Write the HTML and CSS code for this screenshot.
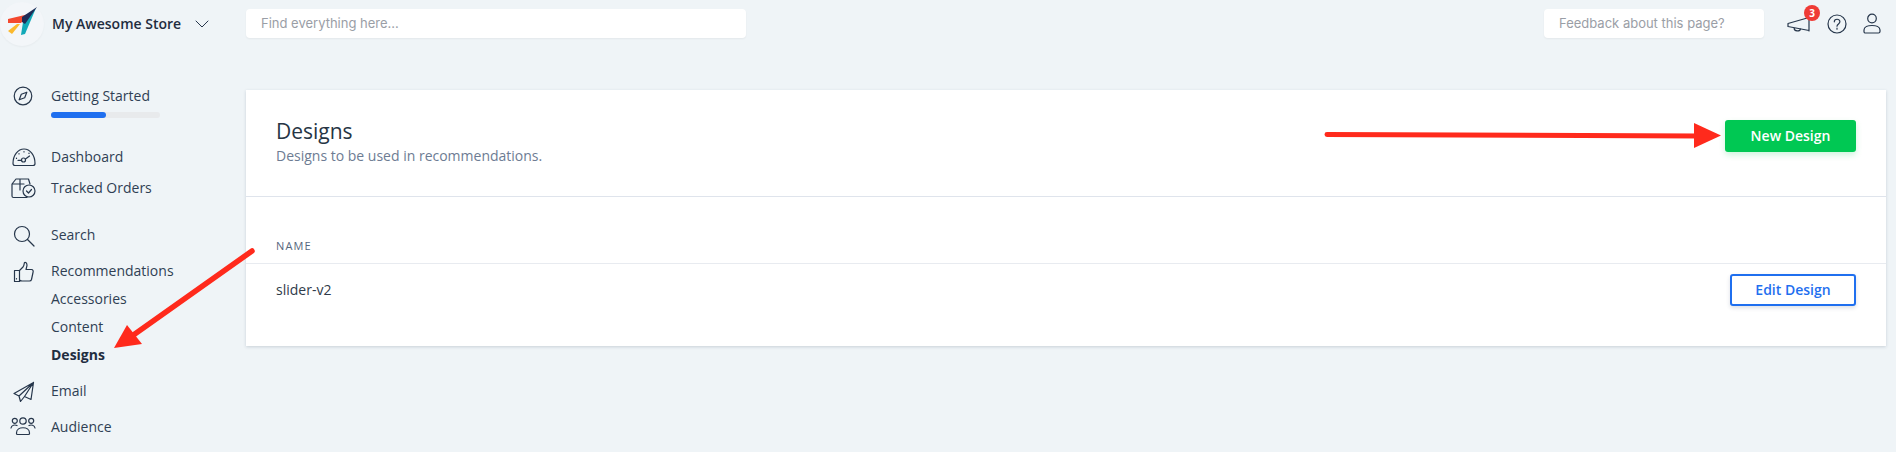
FILE: index.html
```html
<!DOCTYPE html>
<html lang="en">
	<head>
		<meta charset="UTF-8">
		<meta name="viewport" content="width=device-width, initial-scale=1.0">
		<title>Designs</title>
		<link rel="stylesheet" href="styles.css">
	</head>
	<body>
		<header class="topbar">
			<div class="store">
				<div class="store-logo">
					<svg width="44" height="44" viewBox="0 0 44 44">
						<polygon points="8,17 29,12 21,21 8,21" fill="#f4492f"/>
						<polygon points="8,29 17,22 20,22 12,32" fill="#fbb92d"/>
						<polygon points="23,20 21,33 25,32 36,6" fill="#12a9b8"/>
						<polygon points="37,5 22,15 22,20 25,22" fill="#1f2c57"/>
					</svg>
				</div>
				<span class="store-name">My Awesome Store</span>
				<svg class="store-caret" width="14" height="8" viewBox="0 0 14 8"><path d="M1 1l6 6 6-6"/></svg>
			</div>
			<div class="top-field search-field">Find everything here...</div>
			<div class="top-right">
				<div class="top-field feedback-field">Feedback about this page?</div>
				<div class="top-icons">
					<div class="bell">
						<svg width="24" height="20" viewBox="0 0 24 20"><path d="M1 8.500L22 2.500V15.500L1 11.500ZM22 2.500V16M7 12.800c0 4 6 4 6.500 1"/></svg>
						<span class="badge">3</span>
					</div>
					<svg width="20" height="20" viewBox="0 0 20 20"><circle cx="10" cy="10" r="9"/><path d="M7.300 7.800c0-3.400 5.600-3.400 5.600 0 0 2.200-2.900 2-2.900 4.400M10 14.200v1"/></svg>
					<svg width="18" height="21" viewBox="0 0 18 21"><circle cx="9" cy="5.500" r="4.300"/><path d="M1 17c0-6 16-6 16 0v1.500c0 1-.6 1.500-1.500 1.500h-13C1.600 20 1 19.500 1 18.500Z"/></svg>
				</div>
			</div>
		</header>

		<div class="layout">
			<nav class="sidebar">
				<div class="nav-group started">
					<a class="nav-item">
						<svg class="nav-icon" width="20" height="20" viewBox="0 0 20 20"><circle cx="10" cy="10" r="8.800"/><path d="M13.800 6.200L11.700 11.700 6.200 13.800 8.300 8.300Z"/></svg>
						Getting Started
					</a>
					<div class="progress"><div class="progress-fill"></div></div>
				</div>

				<div class="nav-group dashboard">
					<a class="nav-item">
						<svg class="nav-icon icon-wide" width="24" height="20" viewBox="0 0 24 20"><path d="M3 18.500c-1.200 0-2-.7-2-2C1 8 6 2 12 2s11 6 11 14.500c0 1.300-.8 2-2 2ZM17.500 9l-4 3"/><circle cx="11.500" cy="13" r="2"/><path d="M9.500 13.300H6M4.500 11v.5M7 6.500v.5M12 4.500v.5M17 6v.5"/></svg>
						Dashboard
					</a>
					<a class="nav-item tracked">
						<svg class="nav-icon icon-box" width="26" height="22" viewBox="0 0 26 22"><path d="M20 7l-1.500-5H6L2 7v12c0 1 .6 1.500 1.500 1.500H17M2 7h12M10 2v5M10 7v6"/><circle cx="19" cy="14" r="6"/><path d="M16.500 14l2 2 3-3.500"/></svg>
						Tracked Orders
					</a>
				</div>

				<div class="nav-group search">
					<a class="nav-item">
						<svg class="nav-icon" width="22" height="22" viewBox="0 0 22 22"><circle cx="9" cy="9" r="7.500"/><path d="M14.500 14.500L21 21"/></svg>
						Search
					</a>
				</div>

				<div class="nav-group recs">
					<a class="nav-item">
						<svg class="nav-icon" width="22" height="22" viewBox="0 0 22 22"><path d="M6.500 9.500L10 6c1.200-1.500 1-3 1.500-4.500 2.500-.5 3 2.500 2 5l-.5 2h5.500c1.500 0 2 1.500 1.500 3l-1.500 7c-.3 1.200-1 1.500-2 1.500H9c-1 0-2-.5-2.500-1ZM1.500 9.500h5v11h-5Z"/><path d="M3.500 17.500v.5"/></svg>
						Recommendations
					</a>
					<a class="nav-item">Accessories</a>
					<a class="nav-item">Content</a>
					<a class="nav-item active">Designs</a>
				</div>

				<div class="nav-group email">
					<a class="nav-item">
						<svg class="nav-icon" width="22" height="22" viewBox="0 0 22 22"><path d="M20.500 1.500L1 12.500l5 2.500ZM20.500 1.500L18 18.500l-6.500-3ZM20.500 1.500L6 15l1.500 5.500 4-5"/></svg>
						Email
					</a>
				</div>

				<div class="nav-group audience">
					<a class="nav-item">
						<svg class="nav-icon icon-box" width="26" height="20" viewBox="0 0 26 20"><circle cx="13" cy="5" r="3.200"/><circle cx="4.800" cy="4.800" r="2.500"/><circle cx="21.200" cy="4.800" r="2.500"/><path d="M6.500 17c0-7 13-7 13 0v.5c0 .7-.5 1-1 1h-11c-.5 0-1-.3-1-1ZM1 12c.5-3 4-3.500 6-2.500M25 12c-.5-3-4-3.500-6-2.500"/></svg>
						Audience
					</a>
				</div>
			</nav>

			<main class="card">
				<div class="card-head">
					<div>
						<h1>Designs</h1>
						<p>Designs to be used in recommendations.</p>
					</div>
					<a class="btn btn-green">New Design</a>
				</div>
				<div class="table-head">Name</div>
				<div class="table-row">
					<span>slider-v2</span>
					<a class="btn btn-outline">Edit Design</a>
				</div>
			</main>
		</div>

		<!-- the red arrows drawn over the screenshot -->
		<svg class="arrows" width="1896" height="452" viewBox="0 0 1896 452">
			<path d="M1327 134.500L1698 136" stroke="#ff2a1c" stroke-width="5" fill="none"/>
			<polygon points="1694,123 1721,135.500 1694,148" fill="#ff2a1c"/>
			<path d="M252 251L132 336" stroke="#ff2a1c" stroke-width="5.500" fill="none"/>
			<polygon points="127,325 142,344 114,348" fill="#ff2a1c"/>
		</svg>
	</body>
</html>
```

FILE: styles.css
```css
*
{
	box-sizing: border-box;
}
body
{
	font-family: "Open Sans", Arial, sans-serif;
	font-size: 14px;
	background-color: #eff4f7;
	color: #2a3a4f;
	margin: 0;
	height: 452px;
	overflow: hidden;
}
svg
{
	fill: none;
	stroke: #26364b;
	stroke-width: 1.2;
	stroke-linecap: round;
	stroke-linejoin: round;
}
svg polygon
{
	stroke: none;
}
.topbar
{
	display: flex;
	align-items: center;
	height: 47px;
}
.store
{
	display: flex;
	align-items: center;
	width: 246px;
	flex-shrink: 0;
}
.store-logo
{
	width: 44px;
	height: 44px;
	border-radius: 50%;
	background-color: #f3f6f9;
	box-shadow: 0 1px 2px rgba(0, 0, 0, 0.04);
}
.store-logo svg
{
	display: block;
}
.store-name
{
	font-weight: 600;
	color: #1f2d40;
	margin-left: 8px;
	white-space: nowrap;
}
.store-caret
{
	margin-left: 14px;
	margin-top: 1px;
	stroke-width: 1;
}
.top-field
{
	font-family: Inter, Arial, sans-serif;
	font-size: 13px;
	color: #9a9ea6;
	background-color: #fff;
	border-radius: 4px;
	height: 29px;
	line-height: 29px;
	padding-left: 15px;
	box-shadow: 0 1px 2px rgba(0, 0, 0, 0.05);
}
.search-field
{
	width: 500px;
}
.top-right
{
	display: flex;
	align-items: center;
	margin-left: auto;
	padding-right: 15px;
}
.feedback-field
{
	width: 220px;
}
.top-icons
{
	display: flex;
	align-items: center;
	gap: 16px;
	margin-left: 23px;
}
.bell
{
	position: relative;
	height: 20px;
	margin-top: 3px;
}
.badge
{
	position: absolute;
	top: -10px;
	left: 17px;
	width: 16px;
	height: 16px;
	border-radius: 50%;
	background-color: #ef3b36;
	color: #fff;
	font-size: 10px;
	font-weight: 700;
	line-height: 16px;
	text-align: center;
}
.layout
{
	display: flex;
	align-items: flex-start;
}
.sidebar
{
	width: 246px;
	flex-shrink: 0;
}
.nav-item
{
	position: relative;
	display: block;
	height: 28px;
	line-height: 28px;
	padding-left: 51px;
	color: #2f3f54;
}
.nav-item.active
{
	font-weight: 700;
	color: #1f2d40;
}
.nav-icon
{
	position: absolute;
	left: 13px;
	top: 4px;
}
.nav-icon.icon-wide
{
	left: 12px;
}
.nav-icon.icon-box
{
	left: 10px;
	top: 3px;
}
.started
{
	margin-top: 35px;
}
.dashboard
{
	margin-top: 25px;
}
.tracked
{
	margin-top: 3px;
}
.search
{
	margin-top: 19px;
}
.recs
{
	margin-top: 8px;
}
.email
{
	margin-top: 8px;
}
.audience
{
	margin-top: 8px;
}
.progress
{
	width: 109px;
	height: 6px;
	margin: 2px 0 0 51px;
	border-radius: 3px;
	background-color: #e8eaec;
}
.progress-fill
{
	width: 55px;
	height: 6px;
	border-radius: 3px;
	background-color: #1f6fef;
}
.card
{
	width: 1640px;
	height: 256px;
	margin-top: 43px;
	background-color: #fff;
	box-shadow: 0 1px 3px rgba(30, 50, 80, 0.18);
}
.card-head
{
	display: flex;
	justify-content: space-between;
	align-items: flex-start;
	height: 107px;
	padding: 28px 30px 0 30px;
	border-bottom: 1px solid #dfe4ec;
}
h1
{
	font-size: 21px;
	font-weight: 400;
	line-height: 26px;
	color: #263545;
	margin: 0;
}
.card-head p
{
	font-size: 14px;
	line-height: 20px;
	color: #6d7c93;
	margin: 2px 0 0;
}
.btn
{
	display: block;
	font-weight: 600;
	font-size: 14px;
	height: 32px;
	line-height: 32px;
	text-align: center;
	border-radius: 3px;
}
.btn-green
{
	width: 131px;
	margin-top: 2px;
	background-color: #00c853;
	color: #fff;
	box-shadow: 0 3px 6px rgba(0, 200, 83, 0.2);
}
.btn-outline
{
	width: 126px;
	line-height: 28px;
	background-color: #fff;
	color: #1f6fef;
	border: 2px solid #1f6fef;
	box-shadow: 0 2px 4px rgba(30, 50, 80, 0.15);
}
.table-head
{
	height: 67px;
	padding: 41px 0 0 30px;
	font-size: 11px;
	line-height: 16px;
	letter-spacing: 1.1px;
	text-transform: uppercase;
	color: #56667d;
	border-bottom: 1px solid #e8ebf0;
}
.table-row
{
	display: flex;
	justify-content: space-between;
	align-items: flex-start;
	padding: 10px 30px 0 30px;
	color: #2f3b4a;
	line-height: 32px;
}
.arrows
{
	position: absolute;
	top: 0;
	left: 0;
}
```
